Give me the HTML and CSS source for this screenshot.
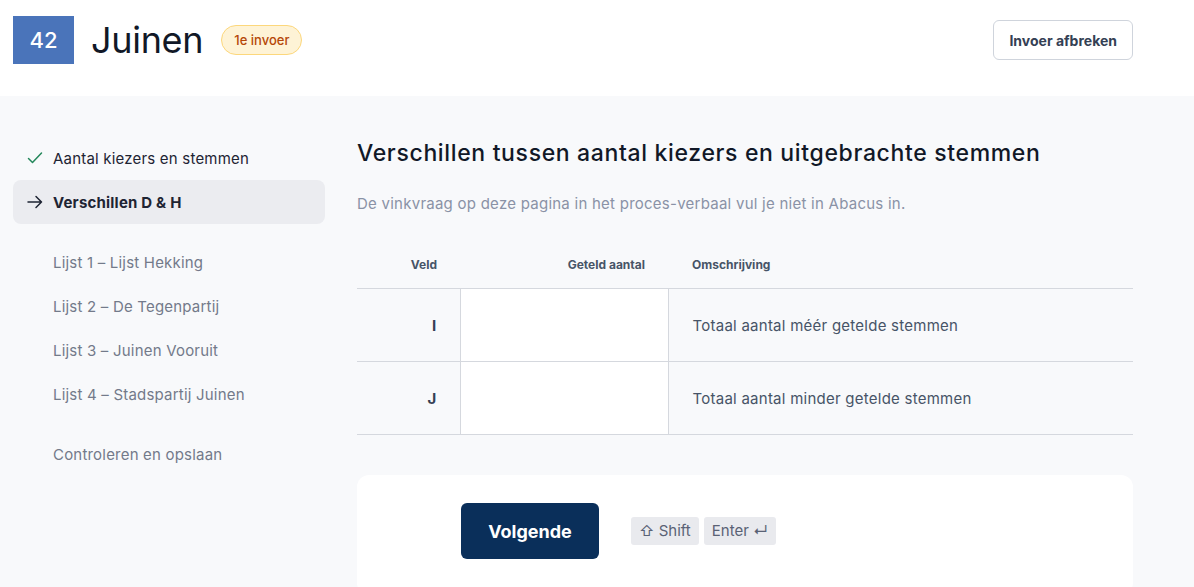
FILE: index.html
```html
<!DOCTYPE html>
<html lang="nl">
  <head>
    <meta charset="UTF-8" />
    <meta name="viewport" content="width=device-width, initial-scale=1.0" />
    <title>Juinen - Invoer</title>
    <link rel="stylesheet" href="styles.css">
  </head>
  <body>
    <header class="topbar">
      <div class="title-group">
        <span class="station-nr">42</span>
        <h1>Juinen</h1>
        <span class="badge">1e invoer</span>
      </div>
      <button type="button" class="btn-outline">Invoer afbreken</button>
    </header>

    <main class="page">
      <nav class="sidebar">
        <ul class="nav-group">
          <li class="nav-item done">
            <svg class="nav-icon" viewBox="0 0 16 16" width="16" height="16"><path d="M1.5 8.5l4 4 9-9.5" fill="none" stroke="#23875a" stroke-width="1.5" stroke-linecap="round" stroke-linejoin="round"/></svg>
            Aantal kiezers en stemmen
          </li>
          <li class="nav-item active">
            <svg class="nav-icon" viewBox="0 0 16 16" width="16" height="16"><path d="M1 8h13.5M9 2.5L14.5 8 9 13.5" fill="none" stroke="#1e2433" stroke-width="1.5" stroke-linecap="round" stroke-linejoin="round"/></svg>
            Verschillen D &amp; H
          </li>
        </ul>
        <ul class="nav-group">
          <li class="nav-item">Lijst 1 – Lijst Hekking</li>
          <li class="nav-item">Lijst 2 – De Tegenpartij</li>
          <li class="nav-item">Lijst 3 – Juinen Vooruit</li>
          <li class="nav-item">Lijst 4 – Stadspartij Juinen</li>
        </ul>
        <ul class="nav-group">
          <li class="nav-item">Controleren en opslaan</li>
        </ul>
      </nav>

      <section class="content">
        <h2>Verschillen tussen aantal kiezers en uitgebrachte stemmen</h2>
        <p class="hint">De vinkvraag op deze pagina in het proces-verbaal vul je niet in Abacus in.</p>

        <table class="input-table">
          <colgroup>
            <col class="w-field" />
            <col class="w-value" />
            <col />
          </colgroup>
          <thead>
            <tr>
              <th class="col-field">Veld</th>
              <th class="col-value">Geteld aantal</th>
              <th class="col-desc">Omschrijving</th>
            </tr>
          </thead>
          <tbody>
            <tr>
              <td class="col-field">I</td>
              <td class="col-value"><input type="text" id="more_votes" /></td>
              <td class="col-desc">Totaal aantal méér getelde stemmen</td>
            </tr>
            <tr>
              <td class="col-field">J</td>
              <td class="col-value"><input type="text" id="fewer_votes" /></td>
              <td class="col-desc">Totaal aantal minder getelde stemmen</td>
            </tr>
          </tbody>
        </table>

        <div class="form-footer">
          <button type="button" class="btn-primary">Volgende</button>
          <span class="shortcut">
            <kbd>⇧ Shift</kbd>
            <kbd>Enter ↵</kbd>
          </span>
        </div>
      </section>
    </main>
  </body>
</html>
```

FILE: styles.css
```css
body {
  margin: 0;
  padding: 0;
  font-family: Inter, "Noto Sans", sans-serif;
  background-color: #f8f9fb;
  color: #1e2433;
}
.topbar {
  background: #ffffff;
  display: flex;
  justify-content: space-between;
  align-items: center;
  height: 96px;
  box-sizing: border-box;
  padding: 0 61px 16px 13px;
}
.title-group {
  display: flex;
  align-items: center;
}
.station-nr {
  width: 61px;
  height: 48px;
  display: flex;
  align-items: center;
  justify-content: center;
  background: #4a74ba;
  color: #ffffff;
  font-size: 22px;
  font-weight: 500;
}
.topbar h1 {
  margin: 0 0 0 17px;
  font-size: 36px;
  font-weight: 400;
  color: #111827;
  letter-spacing: -0.3px;
}
.badge {
  margin-left: 18px;
  padding: 0 12px;
  height: 28px;
  line-height: 28px;
  border: 1px solid #fcd77c;
  background: #fef3d6;
  color: #b54708;
  border-radius: 15px;
  font-size: 13px;
  font-weight: 500;
}
.btn-outline {
  background: #ffffff;
  border: 1px solid #cfd4dc;
  border-radius: 6px;
  height: 40px;
  padding: 0 15px;
  font-family: inherit;
  font-size: 14px;
  font-weight: 700;
  color: #344054;
  cursor: pointer;
}
.page {
  display: flex;
  gap: 32px;
  padding: 0 61px 0 13px;
}
.sidebar {
  width: 312px;
  flex-shrink: 0;
  padding-top: 40px;
}
.nav-group {
  list-style: none;
  margin: 0 0 16px 0;
  padding: 0;
}
.nav-item {
  height: 44px;
  display: flex;
  align-items: center;
  padding-left: 40px;
  font-size: 15px;
  letter-spacing: 0.2px;
  color: #737a8a;
  border-radius: 8px;
}
.nav-item.done,
.nav-item.active {
  padding-left: 14px;
  color: #1e2433;
}
.nav-icon {
  margin-right: 10px;
}
.nav-item.active {
  background: #ebecf0;
  font-weight: 700;
}
.content {
  flex: 1;
  padding-top: 43px;
}
h2 {
  margin: 0;
  font-size: 23px;
  font-weight: 500;
  line-height: 28px;
  letter-spacing: 0.65px;
  color: #111827;
}
.hint {
  margin: 27px 0 0 0;
  font-size: 15px;
  letter-spacing: 0.25px;
  color: #8a92a6;
}
.input-table {
  width: 100%;
  margin-top: 27px;
  border-collapse: collapse;
  table-layout: fixed;
}
.w-field {
  width: 103px;
}
.w-value {
  width: 208px;
}
.input-table th {
  height: 48px;
  font-size: 12px;
  font-weight: 700;
  color: #475467;
  border-bottom: 1px solid #d5d8de;
}
.input-table td {
  height: 72px;
  border-bottom: 1px solid #d5d8de;
  font-size: 15px;
  letter-spacing: 0.25px;
  color: #475467;
}
.col-field {
  text-align: right;
  padding: 0 23px 0 0;
}
.input-table td.col-field {
  font-weight: 700;
  color: #344054;
  border-right: 1px solid #d5d8de;
}
.col-value {
  text-align: right;
  padding: 0 23px 0 0;
}
.input-table td.col-value {
  padding: 0;
  background: #ffffff;
  border-right: 1px solid #d5d8de;
}
.col-value input {
  width: 100%;
  height: 72px;
  box-sizing: border-box;
  border: none;
  background: transparent;
  font-family: inherit;
  font-size: 16px;
  text-align: right;
  padding: 0 16px;
}
.col-desc {
  text-align: left;
  padding: 0 0 0 24px;
}
.form-footer {
  margin-top: 40px;
  background: #ffffff;
  border-radius: 12px;
  padding: 28px 0 36px 104px;
  display: flex;
  align-items: center;
  gap: 32px;
}
.btn-primary {
  background: #0a2f5a;
  color: #ffffff;
  border: none;
  border-radius: 6px;
  width: 138px;
  height: 56px;
  font-family: inherit;
  font-size: 18px;
  font-weight: 700;
  cursor: pointer;
}
.shortcut {
  display: flex;
  gap: 5px;
}
kbd {
  font-family: inherit;
  font-size: 15px;
  color: #5a6275;
  background: #e9eaee;
  border-radius: 3px;
  padding: 0 8px;
  height: 28px;
  line-height: 28px;
}
```
